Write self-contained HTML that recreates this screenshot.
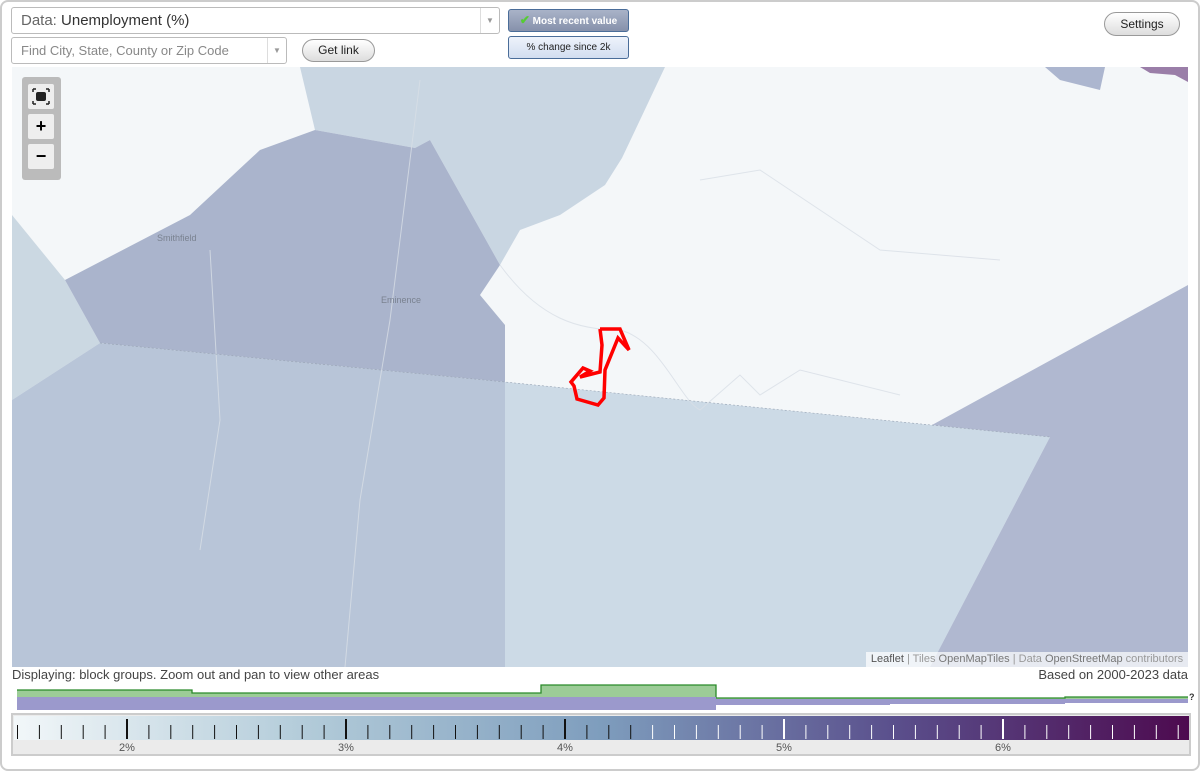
<!DOCTYPE html>
<html><head><meta charset="utf-8"><style>
body{margin:0;width:1200px;height:771px;background:#fff;font-family:"Liberation Sans",sans-serif;overflow:hidden;position:relative}
.frame{position:absolute;left:0;top:0;width:1196px;height:767px;border:2px solid #ccc;border-radius:8px}
.sel{position:absolute;background:#fff;border:1px solid #bbb;border-radius:3px;box-sizing:border-box}
.arr{position:absolute;right:0;top:0;bottom:0;width:18px;border-left:1px solid #ddd;color:#999;font-size:8px;text-align:center}
.btn{position:absolute;border:1px solid #999;border-radius:12px;background:linear-gradient(#fff,#ddd);font-size:12px;color:#222;text-align:center;box-sizing:border-box}
.tb{position:absolute;left:508px;width:121px;border:1px solid #4a6d99;border-radius:3px;font-size:10px;text-align:center;box-sizing:border-box}
.zc{position:absolute;left:22px;top:77px;width:39px;height:103px;background:#bbb;border-radius:3px}
.zb{position:absolute;left:6px;width:26px;height:25px;background:#eee;border-radius:2px;text-align:center;font-weight:bold;font-size:18px;line-height:25px}
</style></head><body>
<div class="frame"></div>
<div class="sel" style="left:11px;top:7px;width:489px;height:27px;font-size:15px;line-height:25px;padding-left:9px;color:#333"><span style="color:#666">Data:</span> Unemployment (%)<div class="arr" style="line-height:25px">▼</div></div>
<div class="sel" style="left:11px;top:37px;width:276px;height:27px;font-size:13px;line-height:25px;padding-left:9px;color:#888">Find City, State, County or Zip Code<div class="arr" style="line-height:25px">▼</div></div>
<div class="btn" style="left:302px;top:39px;width:73px;height:23px;line-height:21px">Get link</div>
<div class="tb" style="top:9px;height:23px;line-height:21px;background:linear-gradient(#a9b3c8,#8691ab);color:#fff;font-weight:bold"><span style="color:#5c3;font-size:12px">✔</span> Most recent value</div>
<div class="tb" style="top:36px;height:23px;line-height:21px;background:linear-gradient(#eef3fb,#d2def0);color:#222">% change since 2k</div>
<div class="btn" style="left:1104px;top:12px;width:76px;height:24px;line-height:22px">Settings</div>

<svg style="position:absolute;left:12px;top:67px" width="1176" height="600" viewBox="12 67 1176 600">
<rect x="12" y="67" width="1176" height="600" fill="#f4f7f9"/>
<polygon points="300,67 665,67 640,120 622,158 605,185 560,215 520,230 500,265 430,140 415,148 315,130" fill="#c9d6e2"/>
<polygon points="12,215 65,280 100,343 12,400" fill="#cbd8e2"/>
<polygon points="65,280 190,215 260,150 315,130 415,148 430,140 500,265 480,295 505,325 505,382 100,343" fill="#aab4cc"/>
<polygon points="100,343 505,382 505,667 12,667 12,400" fill="#b8c5d8"/>
<polygon points="505,382 1050,437 930,667 505,667" fill="#ccdae6"/>
<polygon points="930,667 1050,437 932,425 1188,285 1188,667" fill="#b0b8d0"/>
<path d="M1045,67 L1060,80 L1100,90 L1105,67Z" fill="#acb6cf"/>
<path d="M1140,67 L1150,73 L1175,75 L1188,82 L1188,67Z" fill="#9a7ea8"/>
<g fill="none" stroke="#d8dee6" stroke-width="1" opacity="0.8">
<path d="M500,265 C540,320 580,330 620,330 C660,340 680,400 700,410 L740,375 L760,395 L800,370 L840,380 L900,395"/>
<path d="M420,80 L400,240 L390,320 L360,500 L345,667"/>
<path d="M210,250 L220,420 L200,550"/>
<path d="M700,180 L760,170 L880,250 L1000,260"/>
</g>
<path d="M100,343 L505,382 L1050,437" fill="none" stroke="#98a4b4" stroke-width="0.6" stroke-dasharray="2,2"/>
<text x="157" y="241" font-size="9" fill="#7a8290" font-family="Liberation Sans">Smithfield</text>
<text x="381" y="303" font-size="9" fill="#7a8290" font-family="Liberation Sans">Eminence</text>
<polyline points="600,329 620,329 629,350 618,338 605,370 604,398 598,405 577,399 574,386 571,382 583,368 590,371 580,377 600,372 602,345 600,329" fill="none" stroke="#f00" stroke-width="3.5" stroke-linejoin="miter"/>
</svg>
<div class="zc">
<div class="zb" style="top:7px"><svg width="26" height="25"><rect x="8" y="8" width="10" height="9" rx="2" fill="#222"/><path d="M5,5h3M5,5v3M21,5h-3M21,5v3M5,20h3M5,20v-3M21,20h-3M21,20v-3" stroke="#222" stroke-width="1.5"/></svg></div>
<div class="zb" style="top:37px">+</div>
<div class="zb" style="top:67px">−</div>
</div>
<div style="position:absolute;left:866px;top:652px;width:322px;height:15px;background:rgba(255,255,255,.7);font-size:11px;line-height:15px;color:#999;text-align:center"><b style="color:#555;font-weight:normal">Leaflet</b> | Tiles <span style="color:#777">OpenMapTiles</span> | Data <span style="color:#777">OpenStreetMap</span> contributors</div>
<div style="position:absolute;left:12px;top:667px;font-size:13px;color:#444">Displaying: block groups. Zoom out and pan to view other areas</div>
<div style="position:absolute;right:12px;top:667px;font-size:13px;color:#444">Based on 2000-2023 data</div>
<svg style="position:absolute;left:0;top:680px" width="1200" height="34">
<path d="M17,10 L192,10 L192,13 L541,13 L541,5 L716,5 L716,18 L1065,18 L1065,17 L1188,17 L1188,20 L17,20Z" fill="#9ccc97"/>
<path d="M17,10 L192,10 L192,13 L541,13 L541,5 L716,5 L716,18 L1065,18 L1065,17 L1188,17" fill="none" stroke="#2a8a2a" stroke-width="1.3"/>
<rect x="17" y="17" width="699" height="13" fill="#9b99cc"/>
<rect x="716" y="19" width="174" height="6" fill="#9b99cc"/>
<rect x="890" y="19" width="175" height="5" fill="#9b99cc"/>
<rect x="1065" y="19" width="123" height="4" fill="#9b99cc"/>
<text x="1189" y="20" font-size="9" font-weight="bold" fill="#333" font-family="Liberation Sans">?</text>
</svg>
<div style="position:absolute;left:11px;top:713px;width:1180px;height:43px;border:2px solid #ccc;box-sizing:border-box;background:#ebebeb"></div>
<svg style="position:absolute;left:0;top:0" width="1200" height="771">
<defs><linearGradient id="g" x1="0" x2="1"><stop offset="0" stop-color="#f2f7f9"/><stop offset="0.25" stop-color="#b2cbd9"/><stop offset="0.5" stop-color="#7e9dbd"/><stop offset="0.75" stop-color="#5a4f8c"/><stop offset="1" stop-color="#4d0a4f"/></linearGradient></defs>
<rect x="14" y="716" width="1175" height="24" fill="url(#g)"/>
<g id="t"></g>
<text x="127" y="751" font-size="11" fill="#555" text-anchor="middle" font-family="Liberation Sans">2%</text>
<text x="346" y="751" font-size="11" fill="#555" text-anchor="middle" font-family="Liberation Sans">3%</text>
<text x="565" y="751" font-size="11" fill="#555" text-anchor="middle" font-family="Liberation Sans">4%</text>
<text x="784" y="751" font-size="11" fill="#555" text-anchor="middle" font-family="Liberation Sans">5%</text>
<text x="1003" y="751" font-size="11" fill="#555" text-anchor="middle" font-family="Liberation Sans">6%</text>
</svg>
<script>
var g=document.getElementById('t'),s='';
for(var i=-5;i<49;i++){var x=127+i*21.9;if(x<15||x>1188)continue;var maj=i%10==0;var c=x<640?'#111':'#fff';
s+='<line x1="'+x.toFixed(1)+'" x2="'+x.toFixed(1)+'" y1="'+(maj?719:725)+'" y2="739" stroke="'+c+'" stroke-width="'+(maj?2:1)+'"/>';}
g.innerHTML=s;
</script>
</body></html>
